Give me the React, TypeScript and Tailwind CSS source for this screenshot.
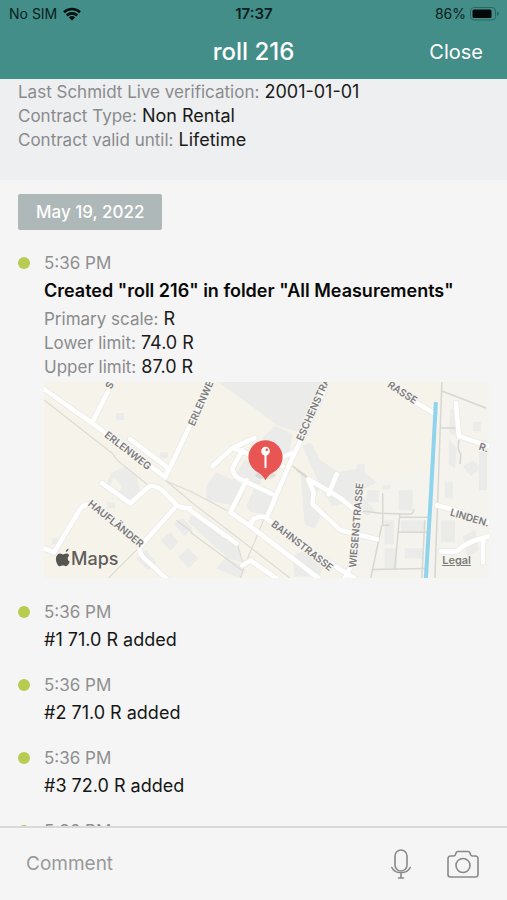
import React from "react";

type Detail = { label: string; value: string };
type MapLabel = { text: string; x: number; y: number; angle: number };

const contract: Detail[] = [
  { label: "Last Schmidt Live verification:", value: "2001-01-01" },
  { label: "Contract Type:", value: "Non Rental" },
  { label: "Contract valid until:", value: "Lifetime" },
];

const limits: Detail[] = [
  { label: "Primary scale:", value: "R" },
  { label: "Lower limit:", value: "74.0 R" },
  { label: "Upper limit:", value: "87.0 R" },
];

const readings = ["#1 71.0 R added", "#2 71.0 R added", "#3 72.0 R added"];

const buildings = [
  "M218 382H324L298 432L278 426Z",
  "M104 488l8-16 14-6 10 8 4 18-10 14-14-8 6-12-8-8-8 12z",
  "M206 486l10-14 30 14-8 20-32-6z",
  "M262 438l12-12 18 8-4 22-12 2z",
  "M232 480l12-20 22 4-6 20z",
  "M246 506l8-18 18 8-6 18-16-2z",
  "M302 446l8-4 10 18 18 12 20-4 18 14-18 10 16 18-8 6-18-14-16 4-10-14z",
  "M300 474l20 10-8 22 8 10-6 12-10-4z",
  "M192 510l44 34 6 18-14-4-40-36z",
  "M160 540l10-8 8 10-8 8zM174 524l8-6 10 10-8 8zM136 558l10-8 10 12-8 8zM178 556l10-8 10 10-10 10zM216 568l10-12 20 14-6 8z",
  "M116 413h8v7h-8zM160 452h8v6h-8zM107 502h8v6h-8zM52 538h6v6h-6z",
  "M356 464h8v16h-8zM366 490h12v12h-12zM382 485h8v4h-8zM398 490h14v20h-14zM384 520h9v24h-9zM400 520h24v12h-24zM384 548h12v20h-12zM404 548h18v10h-18z",
  "M450 408l8 6-4 22-6-4zM472 422h8v9h-8zM448 438l8 10-2 20-6-4zM444 482h8v16h-8zM462 466l10-6 8 8-10 8zM478 440h8v50h-8zM440 520h14v22h-14zM462 536l12-6 4 20-12 6z",
  "M292 556l14-8 20 14-8 14h-24z",
];

const railLines = [
  "M44 400L112 453L117 460L148 485",
  "M44 392L130 450L190 501L290 578",
  "M166 481L190 491L228 511",
  "M190 532L242 570",
  "M176 520L192 532M108 578L138 548",
  "M263 520L243 568L240 578",
  "M237 544L243 564",
];

const lanes = [
  "M441 382L434 578",
  "M441 391L485 408M440 428H456M458 440Q456 450 460 454L459 464",
  "M363 511L380 513L408 514Q413 514 413 509",
  "M382 493V525H389M381 525L370 578",
  "M399 514L394 568M398 517H427M398 532H426M371 569L424 568M424 520L421 578",
  "M292 466L306 476M296 470L310 480",
];

const roads = [
  "M44 389L92 423L165 477",
  "M92 423L108 391",
  "M165 477L208 387",
  "M130 439L168 468L166 474",
  "M102 483L130 503L148 487Q154 483 164 492L174 502Q177 508 190 508",
  "M174 508L140 546Q138 552 144 558L166 578",
  "M44 548L54 552L80 509Q84 503 92 504",
  "M190 510L236 543",
  "M212 466L232 448L254 438",
  "M232 448L282 466",
  "M242 450L232 468Q232 474 238 478L272 494",
  "M246 480L230 512L250 526L318 578",
  "M250 524Q254 514 266 517",
  "M324 390L288 466L266 518L300 544L354 578",
  "M284 456L294 452",
  "M308 479L340 498L354 510",
  "M328 494L336 474",
  "M308 480L313 492L312 504L340 530L376 539",
  "M408 398L434 414",
  "M455 403L458 436L470 440L488 446",
  "M436 505L454 510L488 522",
  "M440 551H456Q464 542 488 536M482 540V562",
  "M344 578L352 562",
  "M242 565L250 560L276 578",
];

const mapLabels: MapLabel[] = [
  { text: "S", x: 109, y: 385, angle: -64 },
  { text: "ERLENWE", x: 200, y: 403, angle: -66 },
  { text: "ERLENWEG", x: 128, y: 450, angle: 38 },
  { text: "HAUFLÄNDER", x: 116, y: 523, angle: 39 },
  { text: "ESCHENSTRA", x: 312, y: 409, angle: -66 },
  { text: "BAHNSTRASSE", x: 302, y: 545, angle: 38 },
  { text: "WIESENSTRASSE", x: 355, y: 525, angle: -85 },
  { text: "RASSE", x: 402, y: 392, angle: 33 },
  { text: "R.", x: 483, y: 447, angle: 17 },
  { text: "LINDEN.", x: 469, y: 517, angle: 17 },
];

function DetailRow({ label, value }: Detail) {
  return (
    <p className="leading-6">
      <span className="text-[17px] text-[#8a8b8d]">{label}</span>{" "}
      <span className="text-[#1a1a1a]">{value}</span>
    </p>
  );
}

function LocationMap() {
  return (
    <div className="relative mt-[3px] mb-[5px] overflow-hidden">
      <svg viewBox="44 382 444 196" className="block w-full" role="img" aria-label="Measurement location">
        <rect x="44" y="382" width="444" height="196" fill="#f6f3eb" />
        <path d="M488 382V578H348L372 480L432 470L441 382Z" fill="#f4f3ed" />
        <g fill="#ebebe9">
          {buildings.map((d) => <path key={d} d={d} />)}
        </g>
        <g fill="none" stroke="#dedbd4" strokeWidth="1.2">
          {railLines.map((d) => <path key={d} d={d} />)}
        </g>
        <g fill="none" stroke="#d9d7d1" strokeWidth="1.5">
          {lanes.map((d) => <path key={d} d={d} />)}
        </g>
        <g fill="none" stroke="#e9e8e3" strokeWidth="6" strokeLinejoin="round" strokeLinecap="round">
          {roads.map((d) => <path key={d} d={d} />)}
        </g>
        <g fill="none" stroke="#ffffff" strokeWidth="4.6" strokeLinejoin="round" strokeLinecap="round">
          {roads.map((d) => <path key={d} d={d} />)}
        </g>
        <path d="M435 402L430 495L425 578" fill="none" stroke="#8fd3ec" strokeWidth="4" />
        <g fontSize="10" fontWeight="600" fill="#7c7c7e" stroke="#f8f6f1" strokeWidth="2" paintOrder="stroke" textAnchor="middle">
          {mapLabels.map((l) => (
            <text key={l.text} x={l.x} y={l.y} dominantBaseline="central" transform={`rotate(${l.angle} ${l.x} ${l.y})`}>
              {l.text}
            </text>
          ))}
        </g>
        <ellipse cx="265" cy="475" rx="10" ry="4" fill="#000000" opacity="0.08" />
        <path d="M265 440a17 17 0 0 1 7 32.500q-4 2-7 7.500q-3-5.500-7-7.500A17 17 0 0 1 265 440Z" fill="#e85552" />
        <circle cx="265" cy="451" r="4.300" fill="#ffffff" />
        <circle cx="266.300" cy="449.700" r="1.300" fill="#e85552" />
        <path d="M265 455V467" stroke="#ffffff" strokeWidth="2" strokeLinecap="round" />
        <path d="M66.200 550.500c.2-1.600 1.300-2.700 2.700-3 .2 1.600-1 3-2.700 3zM69.200 554.600c-1.900 2.400-.8 4.700 1 5.600-.8 2.500-2.300 4.700-3.800 4.700-1.200 0-1.600-.7-3-.7s-1.900.7-3 .7c-2 0-4-4-4-7.400 0-3.500 2.100-5.400 4.100-5.400 1.300 0 2.300.9 3 .9.800 0 1.900-.9 3.400-.9 1 0 2.100.6 2.800 1.600z" transform="translate(-.5 1)" fill="#555552" />
      </svg>
      <span className="absolute bottom-[7px] left-[27px] text-lg leading-6 font-medium text-[#5f5e5b]">Maps</span>
      <a href="#legal" className="absolute right-[18px] bottom-[10px] text-[11px] leading-4 font-semibold text-[#7d7d7a] underline">Legal</a>
    </div>
  );
}

function Entry({ children }: { children?: React.ReactNode }) {
  return (
    <li className="flex gap-3.5">
      <span className="mt-1.5 size-3 shrink-0 rounded-full bg-[#b9cc52]" />
      <div className="min-w-0 flex-1">
        <time className="block text-[17px] leading-6 text-[#8f8f91]">5:36 PM</time>
        {children}
      </div>
    </li>
  );
}

export default function App() {
  return (
    <div className="flex h-screen flex-col overflow-hidden bg-[#f5f5f5] font-['Inter','Liberation_Sans',sans-serif] text-lg text-[#151515]">
      <header className="shrink-0 bg-[#438e88]">
        <div className="grid h-7 grid-cols-3 items-center pr-2 pl-[9px] text-sm text-[#09201f]">
          <div className="flex items-center gap-1.5">
            <span>No SIM</span>
            <svg viewBox="0 0 18 14" className="h-3.5 w-[18px]" aria-label="Wi-Fi">
              <g fill="none" stroke="#06100f" strokeWidth="2.600">
                <path d="M1 5.300a11.500 11.500 0 0 1 16 0" />
                <path d="M3.800 8.500a7.500 7.500 0 0 1 10.400 0" />
              </g>
              <path d="M9 13.500L5.900 10.400a4.500 4.500 0 0 1 6.200 0Z" fill="#06100f" />
            </svg>
          </div>
          <span className="text-center text-[15px] font-semibold">17:37</span>
          <div className="flex items-center justify-end gap-1">
            <span>86%</span>
            <svg viewBox="0 0 29 14" className="h-3.5 w-[29px]" aria-label="Battery">
              <rect x="0.500" y="0.500" width="25" height="12.500" rx="3.500" fill="none" stroke="#2b6662" />
              <rect x="2.500" y="2.500" width="19" height="8.500" rx="1.500" fill="#030808" />
              <path d="M27 4.500q2 .5 2 2.300t-2 2.300z" fill="#2b6662" />
            </svg>
          </div>
        </div>
        <div className="grid h-[51px] grid-cols-[1fr_auto_1fr] items-center px-6 pb-1 text-white">
          <h1 className="col-start-2 text-2xl font-medium">roll 216</h1>
          <button type="button" className="justify-self-end text-xl">Close</button>
        </div>
      </header>

      <main className="min-h-0 flex-1 overflow-hidden">
        <section className="bg-[#edeff1] px-[18px] pt-px pb-7">
          {contract.map((d) => <DetailRow key={d.label} {...d} />)}
        </section>
        <section className="px-[18px] pt-3.5">
          <h2 className="flex h-9 w-fit items-center rounded-xs bg-[#afb8b8] px-[18px] text-[17px] font-medium text-white">May 19, 2022</h2>
          <ol className="mt-[21px] flex flex-col gap-[17px]">
            <Entry>
              <h3 className="leading-8 font-semibold whitespace-nowrap text-[#080808]">Created "roll 216" in folder "All Measurements"</h3>
              {limits.map((d) => <DetailRow key={d.label} {...d} />)}
              <LocationMap />
            </Entry>
            {readings.map((r) => (
              <Entry key={r}>
                <p className="leading-8">{r}</p>
              </Entry>
            ))}
            <Entry />
          </ol>
        </section>
      </main>

      <footer className="flex h-[74px] shrink-0 items-center gap-9 border-t-2 border-[#d8d9d9] pr-7 pl-[26px]">
        <input type="text" aria-label="Comment" placeholder="Comment" className="min-w-0 flex-1 bg-transparent text-[19px] outline-none placeholder:text-[#979a9a]" />
        <button type="button" aria-label="Record voice comment">
          <svg viewBox="0 0 20 30" className="h-[30px] w-5" fill="none" stroke="#898989" strokeWidth="1.600" strokeLinecap="round">
            <rect x="4" y="1" width="12" height="21" rx="6" />
            <path d="M.8 18.500a9.800 8 0 0 0 18.400 0M10 25v4M7.500 29h5" />
          </svg>
        </button>
        <button type="button" aria-label="Take photo">
          <svg viewBox="0 0 32 28" className="h-7 w-8" fill="none" stroke="#898989" strokeWidth="1.600" strokeLinejoin="round">
            <path d="M1 8.500a2.500 2.500 0 0 1 2.500-2.500H6.500Q8 6 8.500 4.500L9 3Q9.500 1.500 11 1.500H21Q22.500 1.500 23 3L23.500 4.500Q24 6 25.500 6H28.500A2.500 2.500 0 0 1 31 8.500V24.500A2.500 2.500 0 0 1 28.500 27H3.500A2.500 2.500 0 0 1 1 24.500Z" />
            <circle cx="16" cy="15.500" r="7" />
          </svg>
        </button>
      </footer>
    </div>
  );
}
